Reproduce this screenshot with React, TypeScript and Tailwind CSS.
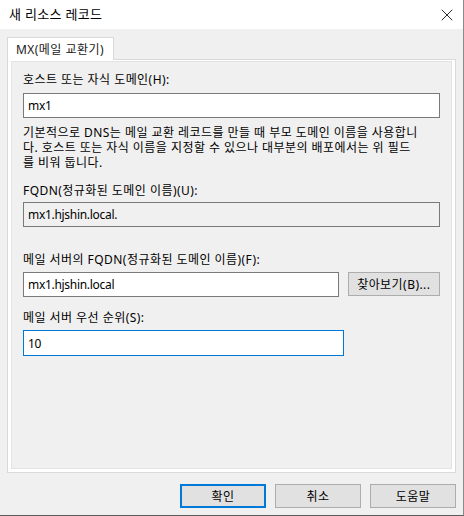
import { X } from 'lucide-react';

const font = { fontFamily: '"Noto Sans", "Noto Sans CJK KR", sans-serif' };

function Field({ value, className = '' }: { value: string; className?: string }) {
    return (
        <div className={`h-[25px] border flex items-center px-[4px] tracking-[-0.3px] ${className}`}>
            {value}
        </div>
    );
}

export default function App() {
    return (
        <div
            className="w-[464px] h-[516px] bg-[#f0f0f0] border-r border-b border-r-[#8a8a8a] border-b-[#5c5c5c] flex flex-col text-[12px] leading-[15px] tracking-[0.45px] text-black"
            style={font}
        >
            {/* Title bar */}
            <div className="h-[29px] bg-white flex items-center justify-between pl-[9px] pr-[6px] shrink-0">
                <span className="text-[13px] tracking-[0.3px]">새 리소스 레코드</span>
                <X size={20} strokeWidth={1} className="text-black" />
            </div>

            {/* Tab control */}
            <div className="pl-[7px] pr-[7px] pt-[8px] flex flex-col">
                <div className="relative z-10 w-[107px] h-[23px] -mb-px bg-white border border-b-0 border-[#d9d9d9] flex items-center pl-[8px] text-[#1a1a1a]">
                    MX(메일 교환기)
                </div>
                <div className="h-[414px] bg-white border border-[#d9d9d9] p-[3px] pt-[1px]">
                    <div className="h-full bg-[#f0f0f0] border border-[#e3e3e3] flex flex-col pl-[11px] pr-[11px] pt-[10px]">
                        <div>호스트 또는 자식 도메인(H):</div>
                        <Field value="mx1" className="mt-[6px] bg-white border-[#7a7a7a]" />
                        <p className="mt-[7px] whitespace-nowrap">
                            기본적으로 DNS는 메일 교환 레코드를 만들 때 부모 도메인 이름을 사용합니
                            <br />
                            다. 호스트 또는 자식 이름을 지정할 수 있으나 대부분의 배포에서는 위 필드
                            <br />
                            를 비워 둡니다.
                        </p>
                        <div className="mt-[13px]">FQDN(정규화된 도메인 이름)(U):</div>
                        <Field value="mx1.hjshin.local." className="mt-[4px] bg-[#f0f0f0] border-[#7a7a7a]" />
                        <div className="mt-[25px]">메일 서버의 FQDN(정규화된 도메인 이름)(F):</div>
                        <div className="mt-[5px] flex items-start gap-[9px]">
                            <Field value="mx1.hjshin.local" className="w-[321px] h-[24px] bg-white border-[#7a7a7a]" />
                            <button className="w-[94px] h-[24px] bg-[#e1e1e1] border border-[#adadad] flex items-center justify-center">
                                찾아보기(B)...
                            </button>
                        </div>
                        <div className="mt-[13px]">메일 서버 우선 순위(S):</div>
                        <Field value="10" className="mt-[5px] w-[321px] h-[26px] bg-white border-[#0078d7]" />
                    </div>
                </div>
            </div>

            {/* Bottom buttons */}
            <div className="mt-[11px] flex justify-end gap-[9px] pr-[7px]">
                <button className="w-[86px] h-[24px] bg-[#e1e1e1] border-2 border-[#0078d7] flex items-center justify-center">확인</button>
                <button className="w-[86px] h-[24px] bg-[#e1e1e1] border border-[#adadad] flex items-center justify-center">취소</button>
                <button className="w-[86px] h-[24px] bg-[#e1e1e1] border border-[#adadad] flex items-center justify-center">도움말</button>
            </div>
        </div>
    );
}
